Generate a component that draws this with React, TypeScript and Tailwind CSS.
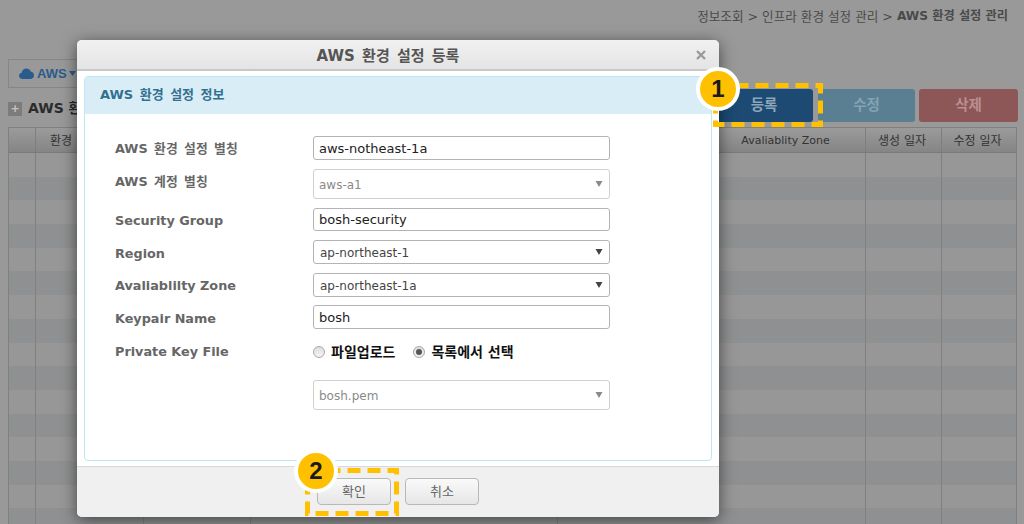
const KO = "font-['DejaVu_Sans','Noto_Sans_CJK_KR',sans-serif]";
const COLS = "grid-cols-[27px_108px_107px_307px_148px_160px_76px_1fr]";

function Caret({ dim }: { dim?: boolean }) {
  return (
    <svg width="8" height="7" viewBox="0 0 8 7" className="absolute right-[6px] top-1/2 -translate-y-1/2">
      <path d="M0.5 0.5H7.5L4 6.5Z" fill={dim ? "#8a8a8a" : "#444444"} />
    </svg>
  );
}

function TextField({ value, className }: { value: string; className: string }) {
  return (
    <div className={`w-[297px] ${className} flex items-center rounded-[3px] border border-[#b4b4b4] bg-white pl-[5px] pt-[1px] text-[13px] text-[#222222]`}>
      {value}
    </div>
  );
}

function SelectField({ value, className, dim }: { value: string; className: string; dim?: boolean }) {
  return (
    <div
      className={`relative w-[297px] ${className} flex items-center rounded-[3px] border pt-[1px] text-[12px] ${
        dim ? "border-[#d0d0d0] pl-[5px] text-[#8a8a8a]" : "border-[#b4b4b4] pl-[6px] text-[#444444]"
      }`}
    >
      {value}
      <Caret dim={dim} />
    </div>
  );
}

function Label({ children, className = "" }: { children: string; className?: string }) {
  return <div className={`w-[198px] shrink-0 text-[12.8px] font-bold text-[#666666] ${className}`}>{children}</div>;
}

function Radio({ on }: { on?: boolean }) {
  return (
    <span className="flex h-[12px] w-[12px] items-center justify-center rounded-full border border-[#a8a8a8] bg-gradient-to-b from-[#dddddd] to-[#f4f4f4]">
      {on && <span className="h-[6px] w-[6px] rounded-full bg-[#555555]" />}
    </span>
  );
}

function Marker({ n, className }: { n: string; className: string }) {
  return (
    <div
      className={`absolute flex h-[44px] w-[44px] items-center justify-center rounded-full border-[4px] border-white bg-[#ffc000] text-[24px] font-bold text-[#1a1a1a] font-['Liberation_Sans',sans-serif] ${className}`}
    >
      {n}
    </div>
  );
}

function Dashed({ w, h, className }: { w: number; h: number; className: string }) {
  return (
    <svg width={w} height={h} className={`absolute ${className}`}>
      <rect x="2.5" y="2.5" width={w - 5} height={h - 5} fill="none" stroke="#ffc000" strokeWidth="5" strokeDasharray="13 7" />
    </svg>
  );
}

const rows = Array.from({ length: 16 }, (_, i) => i);

export default function App() {
  return (
    <div className={`relative h-[524px] w-[1024px] overflow-hidden bg-[#999999] ${KO}`}>
      {/* Page behind the dialog */}
      <div className="flex justify-end pr-[16px] pt-[9px] leading-[15px] text-[#4a4a4a]">
        <span className="text-[12.6px]">정보조회 &gt; 인프라 환경 설정 관리 &gt;&nbsp;</span>
        <span className="text-[12.2px] font-bold">AWS 환경 설정 관리</span>
      </div>

      <div className="ml-[8px] mt-[35px] flex h-[29px] w-[90px] items-center border border-[#868686] pl-[10px] text-[#2a5b8e]">
        <svg width="15" height="11" viewBox="0 0 15 11" className="mr-[3px]">
          <path d="M3.5 11C1.5 11 0 9.6 0 7.8 0 6.2 1.1 5 2.6 4.7 3 2.3 5 .5 7.4.5c2 0 3.7 1.2 4.4 3C13.6 3.8 15 5.5 15 7.4 15 9.4 13.4 11 11.4 11Z" fill="#2a5b8e" />
        </svg>
        <span className="font-['Liberation_Sans',sans-serif] text-[13px] font-bold">AWS</span>
        <svg width="7" height="5" viewBox="0 0 7 5" className="ml-[2px]">
          <path d="M0 0H7L3.5 5Z" fill="#2a5b8e" />
        </svg>
      </div>

      <div className="mt-[1px] flex items-start pl-[8px] pr-[6px]">
        <div className="mt-[9px] flex items-center gap-[6px]">
          <span className="flex h-[14px] w-[14px] items-center justify-center bg-[#7c7c7c] text-[11px] font-bold leading-none text-[#c4c4c4]">+</span>
          <span className="text-[14px] font-bold text-[#2b2b2b]">AWS 환경</span>
        </div>
        <div className="ml-auto flex gap-[4px] text-[14.5px] font-bold">
          <div className="mr-[1px] flex h-[33px] w-[98px] items-center justify-center rounded-[3px] bg-[#1c4a72] text-[#8fa6ba]">등록</div>
          <div className="flex h-[33px] w-[97px] items-center justify-center rounded-[3px] bg-[#5a7f92] text-[#83a3b2]">수정</div>
          <div className="flex h-[33px] w-[99px] items-center justify-center rounded-[3px] bg-[#8d5757] text-[#b98f8f]">삭제</div>
        </div>
      </div>

      <div className="ml-[8px] mt-[5px] w-[1009px] border-x border-t border-[#808080]">
        <div className={`grid h-[25px] ${COLS} items-stretch border-b border-[#7a7a7a] bg-gradient-to-b from-[#9b9b9b] to-[#858585] text-center text-[#333333]`}>
          {["", "환경", "", "", "", "Avaliablity Zone", "생성 일자", "수정 일자"].map((t, i) => (
            <div
              key={i}
              className={`flex items-center border-r border-[#7e7e7e] pt-[2px] last:border-r-0 ${
                i === 1 ? "justify-start pl-[14px] text-[12px]" : i === 5 ? "justify-center text-[11px]" : "justify-center pr-[3px] text-[12px]"
              }`}
            >
              {t}
            </div>
          ))}
        </div>
        {rows.map((r) => (
          <div key={r} className={`grid h-[23.7px] ${COLS} ${r % 2 === 0 ? "bg-[#979797]" : "bg-[#8f9091]"}`}>
            {Array.from({ length: 8 }, (_, i) => (
              <div key={i} className={`border-r border-[#808080] last:border-r-0 ${i === 4 ? "border-transparent" : ""}`} />
            ))}
          </div>
        ))}
      </div>

      {/* Dialog */}
      <div className="absolute left-[77px] top-[40px] flex h-[477px] w-[642px] flex-col rounded-[5px] bg-white shadow-[0_3px_16px_rgba(0,0,0,0.55)]">
        <div className="relative flex h-[31px] shrink-0 items-center justify-center rounded-t-[5px] border-b-[2px] border-[#c8c8c8] bg-gradient-to-b from-[#f1f1f1] to-[#e4e4e4] pr-[20px] pt-[3px] text-[15px] font-bold text-[#555555] [word-spacing:2px]">
          AWS 환경 설정 등록
          <svg width="10" height="10" viewBox="0 0 10 10" className="absolute right-[13px] top-[10px]">
            <path d="M1 1L9 9M9 1L1 9" stroke="#9a9a9a" strokeWidth="2.4" />
          </svg>
        </div>

        <div className="mx-[7px] mt-[5px] h-[385px] shrink-0 rounded-[4px] border border-[#bce8f1]">
          <div className="flex h-[37px] items-center rounded-t-[3px] bg-[#d9edf7] pb-[2px] pl-[15px] text-[13px] font-bold text-[#31708f] [word-spacing:2px]">
            AWS 환경 설정 정보
          </div>
          <div className="pl-[30px] pt-[22px]">
            <div className="flex items-center">
              <Label className="pt-[2px] [word-spacing:2px]">AWS 환경 설정 별칭</Label>
              <TextField value="aws-notheast-1a" className="h-[24px]" />
            </div>
            <div className="mt-[9px] flex items-start">
              <Label className="pt-[3px] [word-spacing:2px]">AWS 계정 별칭</Label>
              <SelectField value="aws-a1" className="h-[30px]" dim />
            </div>
            <div className="mt-[9px] flex items-center">
              <Label className="pt-[2px]">Security Group</Label>
              <TextField value="bosh-security" className="h-[23px]" />
            </div>
            <div className="mt-[9px] flex items-center">
              <Label className="pt-[4px]">Region</Label>
              <SelectField value="ap-northeast-1" className="h-[24px]" />
            </div>
            <div className="mt-[9px] flex items-center">
              <Label className="pt-[2px]">Avaliablilty Zone</Label>
              <SelectField value="ap-northeast-1a" className="h-[24px]" />
            </div>
            <div className="mt-[8px] flex items-center">
              <Label className="pt-[4px]">Keypair Name</Label>
              <TextField value="bosh" className="h-[24px]" />
            </div>
            <div className="mt-[14px] flex h-[18px] items-center">
              <Label>Private Key File</Label>
              <div className="flex items-center text-[14px] font-bold text-[#111111]">
                <Radio />
                <span className="ml-[6px]">파일업로드</span>
                <span className="ml-[18px]"><Radio on /></span>
                <span className="ml-[6px]">목록에서 선택</span>
              </div>
            </div>
            <div className="mt-[19px] flex">
              <div className="w-[198px] shrink-0" />
              <SelectField value="bosh.pem" className="h-[30px]" dim />
            </div>
          </div>
        </div>

        <div className="mt-[5px] flex flex-1 justify-center gap-[14px] rounded-b-[5px] border-t border-[#d8d8d8] bg-[#f0f0f0] pt-[11px] text-[13px] text-[#666666]">
          <div className="flex h-[27px] w-[74px] items-center justify-center rounded-[4px] border border-[#b8b8b8] bg-gradient-to-b from-[#fafafa] to-[#e6e6e6]">확인</div>
          <div className="flex h-[27px] w-[74px] items-center justify-center rounded-[4px] border border-[#b8b8b8] bg-gradient-to-b from-[#fafafa] to-[#e6e6e6]">취소</div>
        </div>
      </div>

      {/* Annotations */}
      <Dashed w={110} h={44} className="left-[713px] top-[83px]" />
      <Dashed w={94} h={48} className="left-[305px] top-[468px]" />
      <Marker n="1" className="left-[696px] top-[67px]" />
      <Marker n="2" className="left-[294px] top-[449px]" />
    </div>
  );
}
